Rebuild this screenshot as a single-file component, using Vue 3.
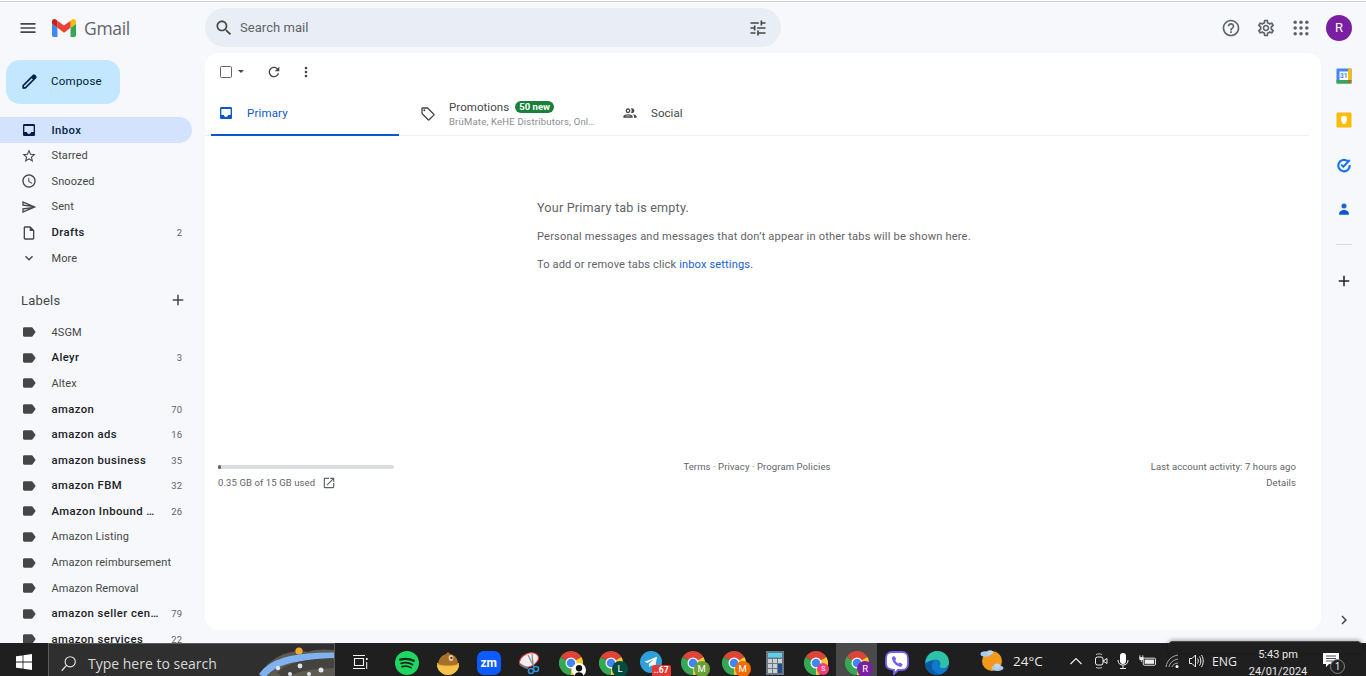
<script setup>
const icons = {
  menu: 'M3 18h18v-2H3v2zm0-5h18v-2H3v2zm0-7v2h18V6H3z',
  search: 'M15.5 14h-.79l-.28-.27C15.41 12.59 16 11.11 16 9.5 16 5.91 13.09 3 9.5 3S3 5.91 3 9.5 5.91 16 9.5 16c1.61 0 3.09-.59 4.23-1.57l.27.28v.79l5 4.99L20.49 19l-4.99-5zm-6 0C7.01 14 5 11.99 5 9.5S7.01 5 9.5 5 14 7.01 14 9.5 11.99 14 9.5 14z',
  tune: 'M3 17v2h6v-2H3zM3 5v2h10V5H3zm10 16v-2h8v-2h-8v-2h-2v6h2zM7 9v2H3v2h4v2h2V9H7zm14 4v-2H11v2h10zm-6-4h2V7h4V5h-4V3h-2v6z',
  help: 'M11 18h2v-2h-2v2zm1-16C6.48 2 2 6.48 2 12s4.48 10 10 10 10-4.48 10-10S17.52 2 12 2zm0 18c-4.41 0-8-3.59-8-8s3.59-8 8-8 8 3.59 8 8-3.59 8-8 8zm0-14c-2.21 0-4 1.79-4 4h2c0-1.1.9-2 2-2s2 .9 2 2c0 2-3 1.75-3 5h2c0-2.25 3-2.5 3-5 0-2.21-1.79-4-4-4z',
  gear: 'M19.43 12.98c.04-.32.07-.64.07-.98 0-.34-.03-.66-.07-.98l2.11-1.65c.19-.15.24-.42.12-.64l-2-3.46c-.09-.16-.26-.25-.44-.25-.06 0-.12.01-.17.03l-2.49 1c-.52-.4-1.08-.73-1.69-.98l-.38-2.65C14.46 2.18 14.25 2 14 2h-4c-.25 0-.46.18-.49.42l-.38 2.65c-.61.25-1.17.59-1.69.98l-2.49-1c-.06-.02-.12-.03-.18-.03-.17 0-.34.09-.43.25l-2 3.46c-.13.22-.07.49.12.64l2.11 1.65c-.04.32-.07.65-.07.98 0 .33.03.66.07.98l-2.11 1.65c-.19.15-.24.42-.12.64l2 3.46c.09.16.26.25.44.25.06 0 .12-.01.17-.03l2.49-1c.52.4 1.08.73 1.69.98l.38 2.65c.03.24.24.42.49.42h4c.25 0 .46-.18.49-.42l.38-2.65c.61-.25 1.17-.59 1.69-.98l2.49 1c.06.02.12.03.18.03.17 0 .34-.09.43-.25l2-3.46c.12-.22.07-.49-.12-.64l-2.11-1.65zm-1.98-1.71c.04.31.05.52.05.73 0 .21-.02.43-.05.73l-.14 1.13.89.7 1.08.84-.7 1.21-1.27-.51-1.04-.42-.9.68c-.43.32-.84.56-1.25.73l-1.06.43-.16 1.13-.2 1.35h-1.4l-.19-1.35-.16-1.13-1.06-.43c-.43-.18-.83-.41-1.23-.71l-.91-.7-1.06.43-1.27.51-.7-1.21 1.08-.84.89-.7-.14-1.13c-.03-.31-.05-.54-.05-.74s.02-.43.05-.73l.14-1.13-.89-.7-1.08-.84.7-1.21 1.27.51 1.04.42.9-.68c.43-.32.84-.56 1.25-.73l1.06-.43.16-1.13.2-1.35h1.39l.19 1.35.16 1.13 1.06.43c.43.18.83.41 1.23.71l.91.7 1.06-.43 1.27-.51.7 1.21-1.07.85-.89.7.14 1.13zM12 8c-2.21 0-4 1.79-4 4s1.79 4 4 4 4-1.79 4-4-1.79-4-4-4zm0 6c-1.1 0-2-.9-2-2s.9-2 2-2 2 .9 2 2-.9 2-2 2z',
  pencil: 'M20.41 4.94l-1.35-1.35c-.78-.78-2.05-.78-2.83 0L3 16.82V21h4.18L20.41 7.77c.79-.78.79-2.05 0-2.83zm-14 14.12L5 19v-1.36l9.82-9.82 1.41 1.41-9.82 9.83z',
  inbox: 'M19 3H5c-1.1 0-2 .9-2 2v14c0 1.1.9 2 2 2h14c1.1 0 2-.9 2-2V5c0-1.1-.9-2-2-2zm0 12h-4c0 1.66-1.35 3-3 3s-3-1.34-3-3H5V6h14v9z',
  star: 'M22 9.24l-7.19-.62L12 2 9.19 8.63 2 9.24l5.46 4.73L5.82 21 12 17.27 18.18 21l-1.63-7.03L22 9.24zM12 15.4l-3.76 2.27 1-4.28-3.32-2.88 4.38-.38L12 6.1l1.71 4.04 4.38.38-3.32 2.88 1 4.28L12 15.4z',
  clock: 'M11.99 2C6.47 2 2 6.48 2 12s4.47 10 9.99 10C17.52 22 22 17.52 22 12S17.52 2 11.99 2zM12 20c-4.42 0-8-3.58-8-8s3.58-8 8-8 8 3.58 8 8-3.58 8-8 8zm.5-13H11v6l5.25 3.15.75-1.23-4.5-2.67z',
  send: 'M4.01 6.03l7.51 3.22-7.52-1 .01-2.22m7.5 8.72L4 17.97v-2.22l7.51-1M2.01 3L2 10l15 2-15 2 .01 7L23 12 2.01 3z',
  draft: 'M14 2H6c-1.1 0-2 .9-2 2v16c0 1.1.9 2 2 2h12c1.1 0 2-.9 2-2V8l-6-6zm4 18H6V4h7v5h5v11z',
  more: 'M16.59 8.59L12 13.17 7.41 8.59 6 10l6 6 6-6z',
  label: 'M17.63 5.84C17.27 5.33 16.67 5 16 5L5 5.01C3.9 5.01 3 5.9 3 7v10c0 1.1.9 1.99 2 1.99L16 19c.67 0 1.27-.33 1.63-.84L22 12l-4.37-6.16z',
  plus: 'M19 13h-6v6h-2v-6H5v-2h6V5h2v6h6v2z',
  refresh: 'M17.65 6.35C16.2 4.9 14.21 4 12 4c-4.42 0-7.99 3.58-7.99 8s3.57 8 7.99 8c3.73 0 6.84-2.55 7.73-6h-2.08c-.82 2.33-3.04 4-5.65 4-3.31 0-6-2.69-6-6s2.69-6 6-6c1.66 0 3.14.69 4.22 1.78L13 11h7V4l-2.35 2.35z',
  dots: 'M12 8c1.1 0 2-.9 2-2s-.9-2-2-2-2 .9-2 2 .9 2 2 2zm0 2c-1.1 0-2 .9-2 2s.9 2 2 2 2-.9 2-2-.9-2-2-2zm0 6c-1.1 0-2 .9-2 2s.9 2 2 2 2-.9 2-2-.9-2-2-2z',
  tag: 'M21.41 11.58l-9-9C12.05 2.22 11.55 2 11 2H4c-1.1 0-2 .9-2 2v7c0 .55.22 1.05.59 1.42l9 9c.36.36.86.58 1.41.58.55 0 1.05-.22 1.41-.59l7-7c.37-.36.59-.86.59-1.41 0-.55-.23-1.06-.59-1.42zM13 20.01L4 11V4h7v-.01l9 9-7 7.02zM6.5 5A1.5 1.5 0 1 0 6.5 8 1.5 1.5 0 0 0 6.5 5z',
  people: 'M9 13.75c-2.34 0-7 1.17-7 3.5V19h14v-1.75c0-2.33-4.66-3.5-7-3.5zM4.34 17c.84-.58 2.87-1.25 4.66-1.25s3.82.67 4.66 1.25H4.34zM9 12c1.93 0 3.5-1.57 3.5-3.5S10.93 5 9 5 5.5 6.57 5.5 8.5 7.07 12 9 12zm0-5c.83 0 1.5.67 1.5 1.5S9.83 10 9 10s-1.5-.67-1.5-1.5S8.17 7 9 7zm7.04 6.81c1.16.84 1.96 1.96 1.96 3.44V19h4v-1.75c0-2.02-3.5-3.17-5.96-3.44zM15 12c1.93 0 3.5-1.57 3.5-3.5S16.93 5 15 5c-.54 0-1.04.13-1.5.35.63.89 1 1.98 1 3.15s-.37 2.26-1 3.15c.46.22.96.35 1.5.35z',
  open: 'M19 19H5V5h7V3H5c-1.11 0-2 .9-2 2v14c0 1.1.89 2 2 2h14c1.1 0 2-.9 2-2v-7h-2v7zM14 3v2h3.59l-9.83 9.83 1.41 1.41L19 6.41V10h2V3h-7z',
  right: 'M8.59 16.59L13.17 12 8.59 7.41 10 6l6 6-6 6z'
}

const nav = [
  { name: 'Inbox', icon: 'inbox', active: true, bold: true },
  { name: 'Starred', icon: 'star' },
  { name: 'Snoozed', icon: 'clock' },
  { name: 'Sent', icon: 'send' },
  { name: 'Drafts', icon: 'draft', bold: true, count: '2' },
  { name: 'More', icon: 'more' }
]

const labels = [
  { name: '4SGM' },
  { name: 'Aleyr', bold: true, count: '3' },
  { name: 'Altex' },
  { name: 'amazon', bold: true, count: '70' },
  { name: 'amazon ads', bold: true, count: '16' },
  { name: 'amazon business', bold: true, count: '35' },
  { name: 'amazon FBM', bold: true, count: '32' },
  { name: 'Amazon Inbound …', bold: true, count: '26' },
  { name: 'Amazon Listing' },
  { name: 'Amazon reimbursement' },
  { name: 'Amazon Removal' },
  { name: 'amazon seller cen…', bold: true, count: '79' },
  { name: 'amazon services', bold: true, count: '22' }
]

const apps = [
  { kind: 'spotify' },
  { kind: 'gold' },
  { kind: 'zm' },
  { kind: 'snip' },
  { kind: 'chrome', lock: true },
  { kind: 'chrome', badge: 'L', tone: 'teal' },
  { kind: 'telegram' },
  { kind: 'chrome', badge: 'M', tone: 'green' },
  { kind: 'chrome', badge: 'M', tone: 'orange' },
  { kind: 'calc' },
  { kind: 'chrome', badge: 'S', tone: 'pink' },
  { kind: 'chrome', badge: 'R', tone: 'purple', active: true },
  { kind: 'viber', tight: true },
  { kind: 'edge', tight: true }
]
</script>

<template>
  <div class="app">
    <header class="top">
      <div class="brand">
        <svg class="ic menu" viewBox="0 0 24 24"><path :d="icons.menu" /></svg>
        <svg class="logo" viewBox="52 42 88 66">
          <path fill="#4285f4" d="M58 108h14V74L52 59v43c0 3.32 2.69 6 6 6" />
          <path fill="#34a853" d="M120 108h14c3.32 0 6-2.69 6-6V59l-20 15" />
          <path fill="#fbbc04" d="M120 48v26l20-15v-8c0-7.42-8.47-11.65-14.4-7.2" />
          <path fill="#ea4335" d="M72 74V48l24 18 24-18v26L96 92" />
          <path fill="#c5221f" d="M52 51v8l20 15V48l-5.6-4.2c-5.94-4.45-14.4-.22-14.4 7.2" />
        </svg>
        <span class="wordmark">Gmail</span>
      </div>
      <div class="search">
        <svg class="ic s-icon" viewBox="0 0 24 24"><path :d="icons.search" /></svg>
        <span class="s-text">Search mail</span>
        <svg class="ic tune" viewBox="0 0 24 24"><path :d="icons.tune" /></svg>
      </div>
      <div class="top-right">
        <svg class="ic tr" viewBox="0 0 24 24"><path :d="icons.help" /></svg>
        <svg class="ic tr" viewBox="0 0 24 24"><path :d="icons.gear" /></svg>
        <svg class="ic tr" viewBox="0 0 24 24">
          <g v-for="y in [5, 12, 19]" :key="y">
            <circle v-for="x in [5, 12, 19]" :key="x" :cx="x" :cy="y" r="2.1" />
          </g>
        </svg>
        <div class="avatar">R</div>
      </div>
    </header>

    <div class="main">
      <aside class="side">
        <button class="compose">
          <svg class="ic pen" viewBox="0 0 24 24"><path :d="icons.pencil" /></svg>
          <span>Compose</span>
        </button>
        <nav class="nav">
          <div v-for="n in nav" :key="n.name" class="row" :class="{ active: n.active, bold: n.bold }">
            <svg class="ic r-ic" viewBox="0 0 24 24"><path :d="icons[n.icon]" /></svg>
            <span class="r-name">{{ n.name }}</span>
            <span v-if="n.count" class="r-count">{{ n.count }}</span>
          </div>
        </nav>
        <div class="lab-head">
          <span>Labels</span>
          <svg class="ic lab-plus" viewBox="0 0 24 24"><path :d="icons.plus" /></svg>
        </div>
        <div class="labs">
          <div v-for="l in labels" :key="l.name" class="row" :class="{ bold: l.bold }">
            <svg class="ic r-ic" viewBox="0 0 24 24"><path :d="icons.label" /></svg>
            <span class="r-name">{{ l.name }}</span>
            <span v-if="l.count" class="r-count">{{ l.count }}</span>
          </div>
        </div>
      </aside>

      <section class="card">
        <div class="toolbar">
          <span class="check"></span>
          <span class="caret"></span>
          <svg class="ic tb refresh" viewBox="0 0 24 24"><path :d="icons.refresh" /></svg>
          <svg class="ic tb dots" viewBox="0 0 24 24"><path :d="icons.dots" /></svg>
        </div>
        <div class="tabs">
          <div class="tab primary">
            <svg class="ic t-ic" viewBox="0 0 24 24"><path :d="icons.inbox" /></svg>
            <span>Primary</span>
          </div>
          <div class="tab promo">
            <svg class="ic t-ic" viewBox="0 0 24 24"><path :d="icons.tag" /></svg>
            <div class="promo-text">
              <div class="promo-line"><span>Promotions</span><span class="new">50 new</span></div>
              <div class="promo-sub">BrüMate, KeHE Distributors, Onl…</div>
            </div>
          </div>
          <div class="tab social">
            <svg class="ic t-ic" viewBox="0 0 24 24"><path :d="icons.people" /></svg>
            <span>Social</span>
          </div>
        </div>
        <div class="empty">
          <p class="e-title">Your Primary tab is empty.</p>
          <p class="e-long">Personal messages and messages that don’t appear in other tabs will be shown here.</p>
          <p>To add or remove tabs click <span class="link">inbox settings</span>.</p>
        </div>
        <footer class="foot">
          <div class="f-left">
            <div class="bar"><div class="bar-fill"></div></div>
            <div class="used">
              <span>0.35 GB of 15 GB used</span>
              <svg class="ic open" viewBox="0 0 24 24"><path :d="icons.open" /></svg>
            </div>
          </div>
          <div class="f-mid">Terms · Privacy · Program Policies</div>
          <div class="f-right">
            <div>Last account activity: 7 hours ago</div>
            <div class="details">Details</div>
          </div>
        </footer>
      </section>

      <aside class="rail">
        <svg class="ra" viewBox="0 0 16 16">
          <rect x="0.5" y="0.5" width="15" height="15" rx="1" fill="#4285f4" />
          <rect x="12" y="0.5" width="3.5" height="15" fill="#fbbc04" />
          <rect x="0.5" y="12" width="15" height="3.5" fill="#34a853" />
          <path d="M12 12h3.5L12 15.5z" fill="#ea4335" />
          <rect x="3.5" y="3.5" width="8.5" height="8.5" fill="#fff" />
          <text x="7.8" y="10.4" class="cal">31</text>
        </svg>
        <svg class="ra" viewBox="0 0 16 16">
          <rect x="0.5" y="0.5" width="15" height="15" rx="1" fill="#fbbc04" />
          <circle cx="8" cy="7" r="3.2" fill="#fff" />
          <rect x="6.4" y="9.5" width="3.2" height="2.4" fill="#fff" />
        </svg>
        <svg class="ra" viewBox="0 0 24 24">
          <path fill="none" stroke="#1a73e8" stroke-width="3.2" d="M17.5 6.2A8.6 8.6 0 1 0 20.6 12" />
          <path fill="none" stroke="#1a73e8" stroke-width="3" d="M7.8 11.4l3.2 3.2 9.6-10" />
        </svg>
        <svg class="ra" viewBox="0 0 24 24">
          <circle cx="12" cy="7.5" r="3.8" fill="#1a67d2" />
          <path d="M4.5 19.5c0-3.5 3.5-6 7.5-6s7.5 2.5 7.5 6c0 .7-.6 1.2-1.2 1.2H5.7c-.6 0-1.2-.5-1.2-1.2z" fill="#0b57d0" />
        </svg>
        <div class="r-div"></div>
        <svg class="ic ra-plus" viewBox="0 0 24 24"><path :d="icons.plus" /></svg>
        <svg class="ic ra-chev" viewBox="0 0 24 24"><path :d="icons.right" /></svg>
      </aside>
    </div>

    <div class="taskbar">
      <div class="notif-panel"></div>
      <div class="start">
        <svg viewBox="0 0 16 16" class="win">
          <path fill="#fff" d="M0 2.3l6.6-.9v6.2H0zM7.4 1.3L16 0v7.6H7.4zM0 8.4h6.6v6.2L0 13.7zM7.4 8.4H16V16l-8.6-1.3z" />
        </svg>
      </div>
      <div class="tsearch">
        <svg viewBox="0 0 20 20" class="t-glass">
          <circle cx="12" cy="8" r="6" fill="none" stroke="#e8e8e8" stroke-width="1.3" />
          <path d="M7.7 12.3L2 18.5" stroke="#e8e8e8" stroke-width="1.4" />
        </svg>
        <span class="t-type">Type here to search</span>
        <svg viewBox="0 0 77 33" class="scene">
          <path d="M2 33C8 20 24 10 36 9c4-3 10-1 14 0 8-3 18-3 27-2v26z" fill="#5d5a52" />
          <circle cx="42" cy="8" r="3.6" fill="#f0a92e" />
          <path d="M5 33C14 20 32 13 77 13" fill="none" stroke="#7fb2f0" stroke-width="7" />
          <path d="M24 33C32 24 50 21 77 20" fill="none" stroke="#45433d" stroke-width="10" />
          <g fill="#dfe6f0">
            <circle cx="21" cy="25" r="2.2" /><circle cx="43" cy="23" r="2.4" /><circle cx="64" cy="27" r="2.5" />
            <circle cx="33" cy="31" r="2" /><circle cx="52" cy="31" r="2" />
          </g>
        </svg>
      </div>
      <div class="taskview">
        <svg viewBox="0 0 16 16" class="tv">
          <path fill="none" stroke="#f2f2f2" stroke-width="1.1" d="M2.5 4.5h9v7h-9zM1 1.5h12M1 14.5h12" />
          <rect x="14" y="4" width="1.6" height="2" fill="#f2f2f2" />
          <rect x="14.2" y="8" width="1" height="7" fill="#f2f2f2" />
        </svg>
      </div>
      <div class="strip">
        <div v-for="(a, i) in apps" :key="i" class="slot" :class="{ on: a.active, tight: a.tight }">
          <svg v-if="a.kind === 'spotify'" class="app-ic" viewBox="0 0 24 24">
            <circle cx="12" cy="12" r="12" fill="#1ed760" />
            <g fill="none" stroke="#12261a" stroke-linecap="round">
              <path stroke-width="2.3" d="M5.2 8.6c4.5-1.3 9.6-.9 13.6 1.2" />
              <path stroke-width="1.9" d="M6.1 12.3c3.9-1.1 8-.7 11.3 1.2" />
              <path stroke-width="1.6" d="M6.9 15.6c3.2-.8 6.4-.5 9.2 1" />
            </g>
          </svg>
          <svg v-else-if="a.kind === 'gold'" class="app-ic" viewBox="0 0 24 24">
            <path d="M1 12a11 12 0 0 0 22 0z" fill="#f0b23c" />
            <path d="M2 13C3 6 7 4 10 3l2-2 2 2c5 1 8 4 8 10-5 2-15 2-20 0z" fill="#a66f2a" />
            <ellipse cx="15" cy="7" rx="2.4" ry="3" fill="#eac7a0" />
            <circle cx="15.4" cy="7" r="1.1" fill="#3a2412" />
            <path d="M1 14c6 2 16 2 22 0v1c-1 6-7 9-11 9S2 21 1 15z" fill="#f7c24b" />
          </svg>
          <div v-else-if="a.kind === 'zm'" class="zm">zm</div>
          <svg v-else-if="a.kind === 'snip'" class="app-ic" viewBox="0 0 24 24">
            <ellipse cx="11" cy="9" rx="10" ry="6.5" fill="#f4eeee" stroke="#d93d3d" stroke-width="1.1" transform="rotate(-24 11 9)" />
            <path d="M2 13c4 3 6 4 8 4" stroke="#777" stroke-width="2" fill="none" />
            <path d="M10 4l6 12M14 3l1 10" stroke="#8a8f96" stroke-width="1.3" />
            <circle cx="18" cy="18" r="2.5" fill="none" stroke="#2f8fd6" stroke-width="1.6" />
            <circle cx="13" cy="20" r="2.5" fill="none" stroke="#2f8fd6" stroke-width="1.6" />
          </svg>
          <template v-else-if="a.kind === 'chrome'">
            <svg class="app-ic" viewBox="0 0 48 48">
              <path fill="#db4437" d="M24 24L3.2 12A24 24 0 0 1 44.8 12z" />
              <path fill="#fcc934" d="M24 24L44.8 12A24 24 0 0 1 24 48z" />
              <path fill="#34a853" d="M24 24V48A24 24 0 0 1 3.2 12z" />
              <circle cx="24" cy="24" r="11" fill="#fff" />
              <circle cx="24" cy="24" r="8.6" fill="#4285f4" />
            </svg>
            <svg v-if="a.lock" class="lock" viewBox="0 0 16 16">
              <circle cx="8" cy="8" r="8" fill="#fff" />
              <circle cx="8" cy="6" r="3.6" fill="#111" />
              <path d="M3 16c0-4 2-5.5 5-5.5s5 1.5 5 5.5z" fill="#111" />
            </svg>
            <div v-else class="ch-badge" :class="a.tone">{{ a.badge }}</div>
          </template>
          <template v-else-if="a.kind === 'telegram'">
            <svg class="app-ic" viewBox="0 0 24 24">
              <circle cx="11" cy="11" r="11" fill="#2f9fd8" />
              <path d="M4.5 10.8l12.5-5-2 11.5-3.8-3-2 2-.4-3.3 5-4.8-6.3 3.9z" fill="#fff" />
            </svg>
            <div class="tg-badge">..67</div>
          </template>
          <svg v-else-if="a.kind === 'calc'" class="calc" viewBox="0 0 18 24">
            <rect width="18" height="24" fill="#6d7781" />
            <rect x="2" y="2" width="14" height="4.5" fill="#5ad0ee" />
            <g fill="#c9d0d6">
              <rect x="2" y="8" width="4" height="4" /><rect x="7" y="8" width="4" height="4" />
              <rect x="2" y="13" width="4" height="4" /><rect x="7" y="13" width="4" height="4" />
              <rect x="2" y="18" width="4" height="4" /><rect x="7" y="18" width="4" height="4" />
              <rect x="12" y="8" width="4" height="4" />
            </g>
            <rect x="12" y="13" width="4" height="9" fill="#1b4f91" />
          </svg>
          <svg v-else-if="a.kind === 'viber'" class="app-ic" viewBox="0 0 24 24">
            <path d="M7 1h10c3.5 0 6 2.500 6 6v6c0 3.500-2.500 6-6 6h-4l-4 4v-4.200C4 18.500 1 16.500 1 13V7c0-3.500 2.500-6 6-6z" fill="#fff" stroke="#7360f2" stroke-width="1.8" />
            <path d="M8 5.500l1.500-.3 1.700 2.700-1 1.300c.7 1.600 1.800 2.700 3.400 3.400l1.300-1 2.600 1.700-.3 1.500c-.5 1-1.500 1.300-2.500 1C10.500 14.500 7.800 11.800 7 7.800c-.2-1 .2-1.800 1-2.300z" fill="#7360f2" />
          </svg>
          <svg v-else-if="a.kind === 'edge'" class="app-ic" viewBox="0 0 24 24">
            <circle cx="12" cy="12" r="12" fill="#1278c9" />
            <path d="M0.500 12C1 5 6 0 12 0c6.500 0 12 4.500 12 11 0 4-3 6-6 6-2 0-3.500-.8-3.500-1.500 2-2 1.500-7-3.500-7-4 0-7 2-11 3.500z" fill="#2fc3a5" />
            <path d="M9 10c-3 2-3 8 1 11 1.500 1 3 1.800 5 2.500-7 1.500-14-3-15-10C3 10 6 9 9 10z" fill="#0c59a4" />
          </svg>
        </div>
      </div>

      <div class="tray">
        <svg class="weather" viewBox="0 0 24 24">
          <circle cx="12" cy="12" r="10" fill="#f39a1c" />
          <ellipse cx="5.500" cy="5" rx="5" ry="2.800" fill="#a9cbec" />
          <ellipse cx="10" cy="3.500" rx="3" ry="2.200" fill="#bcd6f0" />
          <ellipse cx="17.500" cy="19" rx="6" ry="3" fill="#a9cbec" />
          <ellipse cx="17" cy="16.800" rx="3" ry="2.200" fill="#bcd6f0" />
        </svg>
        <span class="temp">24°C</span>
        <svg class="tr-ic chev" viewBox="0 0 16 16"><path d="M2.500 11L8 5.500 13.500 11" fill="none" stroke="#eee" stroke-width="1.2" /></svg>
        <svg class="tr-ic cam" viewBox="0 0 16 16">
          <rect x="2.500" y="4" width="7.500" height="8" rx="2" fill="none" stroke="#eee" />
          <path d="M10 8l4-2.500v5z" fill="none" stroke="#eee" />
          <path d="M3 1.500c2-.8 4-.8 6 0M3 14.500c2 .8 4 .8 6 0" fill="none" stroke="#eee" stroke-width=".8" />
        </svg>
        <svg class="tr-ic mic" viewBox="0 0 16 16">
          <rect x="5" y="0" width="6" height="11" rx="3" fill="#fff" />
          <path d="M3 7c0 3.500 2 5 5 5s5-1.500 5-5M8 12v3M5 15.500h6" fill="none" stroke="#eee" />
        </svg>
        <svg class="tr-ic batt" viewBox="0 0 18 12">
          <rect x="4.500" y="3" width="13" height="7.500" rx="1" fill="none" stroke="#eee" />
          <rect x="6" y="4.500" width="10" height="4.500" fill="#eee" />
          <path d="M0 2.500h5M1 0v2.500M4 0v2.500M2.500 5v2" stroke="#eee" fill="none" />
          <rect x="0.500" y="2.500" width="4" height="2.500" fill="#eee" />
        </svg>
        <svg class="tr-ic wifi" viewBox="0 0 16 16">
          <g fill="none" stroke="#bbb" stroke-width=".9">
            <path d="M1 14C2 7 7 3 13 2" /><path d="M4 14c.8-4 4-7 9-8" /><path d="M7 14c.5-2 3-4 6-4" />
          </g>
          <circle cx="12" cy="13.500" r="1.500" fill="#fff" />
        </svg>
        <svg class="tr-ic vol" viewBox="0 0 16 16">
          <path d="M1.500 5.500h2.500L7.500 2v12L4 10.500H1.500z" fill="none" stroke="#eee" />
          <path d="M9.500 5.500c1 1.500 1 3.500 0 5M11.500 3.500c1.800 2.500 1.800 6.500 0 9M13.500 2c2.300 3.500 2.300 8.500 0 12" fill="none" stroke="#eee" />
        </svg>
        <span class="eng">ENG</span>
        <div class="datetime">
          <div>5:43 pm</div>
          <div>24/01/2024</div>
        </div>
        <div class="notif">
          <svg class="note" viewBox="0 0 16 16">
            <path d="M0 0h16v11H6L3 14v-3H0z" fill="#fff" />
            <path d="M3 3h10M3 5.500h10M3 8h7" stroke="#222" stroke-width=".8" />
          </svg>
          <span class="note-badge">1</span>
        </div>
      </div>
    </div>
  </div>
</template>

<style>
html, body { margin: 0; padding: 0; overflow: hidden; }
</style>

<style scoped>
.app {
  width: 1366px;
  height: 676px;
  overflow: hidden;
  display: flex;
  flex-direction: column;
  box-sizing: border-box;
  background: #f6f8fc;
  border-top: 1px solid #fff;
  font-family: Roboto, "Liberation Sans", sans-serif;
  color: #444746;
}
.ic { fill: #444746; display: block; flex: none; }

.top {
  height: 52px;
  flex: none;
  border-top: 1px solid #ccc;
  box-sizing: border-box;
  display: flex;
  padding-top: 6px;
}
.brand { width: 205px; flex: none; display: flex; align-items: center; height: 39px; }
.menu { width: 20px; height: 20px; margin-left: 18px; }
.logo { width: 24px; height: 18px; margin-left: 14px; }
.wordmark { margin-left: 8px; font-size: 17.5px; color: #5f6368; font-family: "Open Sans", Roboto, sans-serif; letter-spacing: -.3px; }
.search {
  width: 576px;
  height: 39px;
  flex: none;
  border-radius: 20px;
  background: #e9eef6;
  display: flex;
  align-items: center;
  box-sizing: border-box;
}
.s-icon { width: 20px; height: 20px; margin-left: 9px; }
.s-text { margin: -1px 0 0 6px; font-size: 13px; color: #5f6368; letter-spacing: .05px; flex: 1; }
.tune { width: 20px; height: 20px; margin-right: 13px; }
.top-right { flex: 1; display: flex; align-items: center; justify-content: flex-end; height: 39px; padding-right: 14px; }
.tr { width: 20px; height: 20px; fill: #5f6368; margin-right: 15px; }
.avatar {
  width: 26px; height: 26px; border-radius: 50%;
  background: #7b1fa2; color: #fff; font-size: 13px;
  display: flex; align-items: center; justify-content: center;
}

.main { flex: 1; min-height: 0; display: flex; }
.side { width: 205px; flex: none; overflow: hidden; }
.compose {
  display: flex; align-items: center;
  width: 114px; height: 44px;
  margin: 7px 0 0 6px; padding: 0 0 2px;
  border: 0; border-radius: 14px;
  background: #c2e7ff; color: #001d35;
  font: 400 11.5px Roboto, sans-serif;
  letter-spacing: .25px;
}
.pen { width: 19px; height: 19px; margin: 0 12px 0 14px; fill: #041e49; }
.nav { margin-top: 13.4px; }
.row {
  height: 25.6px;
  width: 192px;
  display: flex;
  align-items: center;
  box-sizing: border-box;
  padding: 0 10px 0 21px;
  border-radius: 0 13px 13px 0;
  font-size: 11px;
  letter-spacing: .1px;
  color: #444746;
}
.row.bold { font-weight: 500; font-size: 11.3px; letter-spacing: .42px; color: #202124; }
.row.active { background: #d3e3fd; color: #041e49; }
.row.active .r-ic { fill: #041e49; }
.r-ic { width: 16px; height: 16px; margin-right: 14.5px; }
.r-name { flex: 1; min-width: 0; white-space: nowrap; }
.r-count { font-size: 9.5px; font-weight: 400; color: #5f6368; margin-left: auto; letter-spacing: 0; }
.lab-head {
  display: flex; align-items: center;
  height: 26px; margin-top: 16.1px;
  padding-left: 21px; width: 192px; box-sizing: border-box;
  font-size: 13px; letter-spacing: .2px;
}
.lab-plus { width: 18px; height: 18px; margin-left: auto; margin-right: 5px; }
.labs { margin-top: 6.4px; }

.card {
  flex: 1; min-width: 0;
  margin-bottom: 13px;
  background: #fff;
  border-radius: 13px;
  display: flex; flex-direction: column;
}
.toolbar { height: 39px; flex: none; display: flex; align-items: center; padding-bottom: 2px; box-sizing: border-box; }
.check { width: 10px; height: 10px; border: 1.5px solid #5f6368; border-radius: 1.5px; margin-left: 15px; }
.caret { border: 3px solid transparent; border-top: 3.5px solid #444746; margin: 3px 0 0 6px; }
.tb { width: 16px; height: 16px; }
.refresh { margin-left: 22px; }
.dots { margin-left: 16px; }
.tabs {
  height: 44px; flex: none;
  display: flex; padding-left: 6px; margin-right: 12px;
  border-bottom: 1px solid #f0f0f0;
  box-sizing: border-box;
  font-size: 11.5px; letter-spacing: .05px;
}
.tab { display: flex; align-items: center; box-sizing: border-box; height: 44px; }
.t-ic { width: 16px; height: 16px; }
.primary { width: 188px; padding-left: 7px; color: #0b57d0; font-weight: 400; letter-spacing: .15px; border-bottom: 2px solid #0b57d0; }
.primary .t-ic { fill: #0b57d0; margin-right: 13px; }
.promo { width: 211px; padding-left: 21px; }
.promo .t-ic { margin-right: 13px; }
.promo-line { display: flex; align-items: center; gap: 6px; height: 16px; margin-top: -3px; }
.new {
  background: #188038; color: #fff; font-size: 9.5px; font-weight: 700;
  height: 12px; line-height: 12px; border-radius: 6px; padding: 0 4px; letter-spacing: .05px;
}
.promo-sub { font-size: 9.5px; color: #8a8d91; letter-spacing: .2px; margin-top: 1px; white-space: nowrap; }
.social { padding-left: 12px; padding-bottom: 2px; }
.social .t-ic { margin-right: 13px; }

.empty { margin: 58px 0 0 332px; color: #5f6368; font-size: 11.1px; letter-spacing: .13px; }
.empty p { margin: 0; height: 28.5px; line-height: 28.5px; white-space: nowrap; }
.empty .e-title { font-size: 12.6px; letter-spacing: .2px; }
.empty .e-long { letter-spacing: .18px; }
.link { color: #1a5fd0; }
.foot {
  margin-top: 180px;
  padding: 0 25px 0 13px;
  display: grid;
  grid-template-columns: 1fr auto 1fr;
  font-size: 9.5px; color: #5f6368; letter-spacing: .1px;
}
.bar { width: 176px; height: 4px; border-radius: 2px; background: #dadce0; margin-top: 5px; }
.bar-fill { width: 3px; height: 4px; border-radius: 2px; background: #5f6368; }
.used { display: flex; align-items: center; margin-top: 7px; height: 14px; }
.open { width: 14px; height: 14px; margin-left: 7px; fill: #5f6368; }
.f-mid { line-height: 14px; }
.f-right { text-align: right; line-height: 16px; margin-top: -1px; }

.rail { flex: none; width: 45px; display: flex; flex-direction: column; align-items: center; padding-top: 15px; }
.ra { width: 16px; height: 16px; display: block; margin-bottom: 28.3px; flex: none; }
.cal { font: 700 6.5px Roboto, sans-serif; fill: #4285f4; text-anchor: middle; }
.r-div { width: 16px; height: 1px; background: #dadce0; margin-top: -1px; }
.ra-plus { width: 18px; height: 18px; margin-top: 27px; fill: #202124; }
.ra-chev { width: 18px; height: 18px; margin-top: 321px; fill: #444746; }

.taskbar {
  height: 33px; flex: none;
  background: #1f1f1f;
  display: flex;
  position: relative;
  color: #e8e8e8;
  font-family: "Open Sans", Roboto, sans-serif;
}
.notif-panel {
  position: absolute; left: 1168px; top: -2px; width: 194px; height: 12px;
  border-radius: 5px 5px 0 0;
  background: #1f1f1f;
  box-shadow: 0 -1px 4px rgba(0,0,0,.35);
  border-top: 1px solid #4a4a4a;
  box-sizing: border-box;
}
.start { width: 48px; display: flex; align-items: center; justify-content: center; }
.win { width: 16px; height: 16px; margin-top: 4px; }
.tsearch {
  width: 287px; background: #2f2f2f;
  border-top: 1px solid #5c5c5c; border-left: 1px solid #5c5c5c; border-right: 1px solid #5c5c5c;
  box-sizing: border-box;
  display: flex; align-items: center; position: relative; overflow: hidden;
  padding-top: 6px;
}
.t-glass { width: 17px; height: 17px; margin-left: 11px; }
.t-type { margin-left: 11px; font-size: 14px; color: #d9d9d9; white-space: nowrap; }
.scene { position: absolute; right: 0; top: -1px; width: 77px; height: 33px; }
.taskview { width: 50px; display: flex; align-items: center; justify-content: center; }
.tv { width: 16px; height: 16px; margin-top: 4px; }
.strip { display: flex; align-items: flex-start; margin-left: 1.5px; }
.slot { width: 40.9px; height: 33px; display: flex; justify-content: center; padding-top: 8px; box-sizing: border-box; position: relative; overflow: hidden; flex: none; }
.slot.on { background: #4a4a4a; }
.slot.tight { margin-left: -1px; }
.app-ic { width: 24px; height: 24px; display: block; }
.zm {
  width: 24px; height: 24px; border-radius: 7px; background: #0b5cff; color: #fff;
  font: 700 12px/24px Roboto, sans-serif; text-align: center;
}
.calc { width: 18px; height: 24px; display: block; }
.ch-badge {
  position: absolute; left: 21px; top: 18px;
  width: 16px; height: 16px; border-radius: 50%;
  color: #fff; font: 400 9.5px/15px Roboto, sans-serif; text-align: center;
}
.teal { background: #004d40; }
.green { background: #689f38; }
.orange { background: #ef6c00; }
.pink { background: #ec407a; width: 12px; height: 12px; left: 22px; top: 20px; font-size: 7px; line-height: 12px; }
.purple { background: #7b1fa2; }
.lock { position: absolute; left: 22px; top: 20px; width: 14px; height: 14px; }
.tg-badge {
  position: absolute; left: 20px; top: 22px; height: 11px; padding: 0 2px;
  background: #e53935; color: #fff; border-radius: 2px 2px 0 0;
  font: 700 8.5px/11px Roboto, sans-serif;
}

.tray { display: flex; align-items: center; position: relative; margin-left: 23px; }
.weather { width: 24px; height: 24px; margin-top: 3px; }
.temp { font-size: 13.5px; margin-left: 9px; width: 42px; color: #e8e8e8; margin-top: 2px; }
.tr-ic { width: 16px; height: 16px; display: block; margin-top: 3px; flex: none; }
.chev { margin-left: 13px; }
.cam { margin-left: 9px; }
.mic { margin-left: 6px; }
.batt { width: 17px; height: 12px; margin-left: 8.5px; }
.wifi { margin-left: 8.5px; }
.vol { margin-left: 7px; }
.eng { font-size: 12.3px; margin-left: 8px; margin-top: 3px; }
.datetime { font: 11px/17px Roboto, sans-serif; text-align: center; width: 72px; margin-left: 5px; margin-top: 7px; white-space: nowrap; }
.notif { position: relative; width: 18px; height: 18px; margin-left: 9px; margin-top: 4px; }
.note { width: 16px; height: 16px; display: block; }
.note-badge {
  position: absolute; left: 7px; top: 6px; width: 15px; height: 15px; border-radius: 50%;
  background: #222; border: 1px solid #888; box-sizing: border-box;
  font-size: 10px; line-height: 13px; text-align: center; color: #fff;
}
</style>
